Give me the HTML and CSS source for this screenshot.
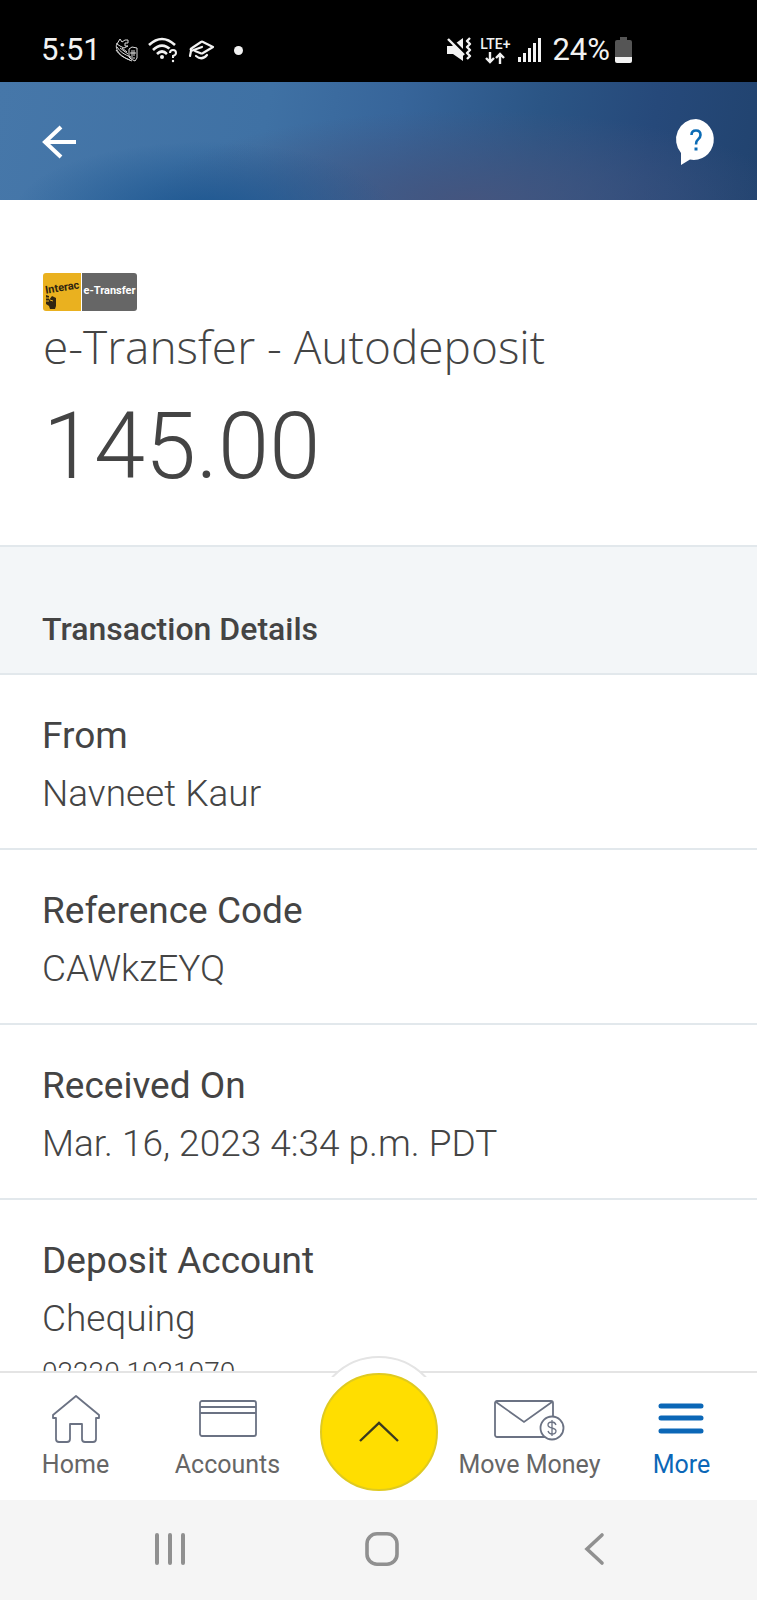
FILE: index.html
```html
<!DOCTYPE html>
<html lang="en">
<head>
<meta charset="utf-8">
<meta name="viewport" content="width=device-width, initial-scale=1">
<title>Transaction Details</title>
<link rel="stylesheet" href="styles.css">
</head>
<body>
<div class="status">
  <div class="status-group">
    <span class="clock">5:51</span>
    <svg width="24" height="24" viewBox="0 0 24 24" fill="none" stroke="#ddd" stroke-width="1"><path d="M3 5C0 12 7 19 18 23M3 9C6 14 11 17 17 19M2 12C5 17 10 20 16 22M3 6L6 1L8 4L11 2H14V5H11V8H14L10 10L6 8ZM8 10L13 14M15 11L18 9L23 10V20L21 23L17 21L15 19ZM18 12V19M20 12V18M6 10L14 16M16 15H22M16 20H21"/></svg>
    <svg width="30" height="26" viewBox="0 0 30 26" fill="none" stroke="#f2f2f2" stroke-width="2.6"><path d="M1 8Q14 -4 27 8M5 13Q14 4 23 13M9 17Q14 12 19 17"/><circle cx="14" cy="20" r="2" fill="#f2f2f2" stroke="none"/><path d="M22 16Q22 13 25 13Q28 13 28 16Q28 18 25 19V21" stroke="#000" stroke-width="5"/><path d="M22 16Q22 13 25 13Q28 13 28 16Q28 18 25 19V21" stroke-width="2"/><circle cx="25" cy="24" r="1.2" fill="#f2f2f2" stroke="none"/></svg>
    <svg width="26" height="24" viewBox="0 0 26 24" fill="none" stroke="#f2f2f2" stroke-width="2.2" stroke-linejoin="round" stroke-linecap="round"><path d="M14 9L3 13L2 18M3 12Q2 11 4 10L13 4Q14 3 15 4L25 9L15 15Q14 16 12 15L7 13M8 18Q14 23 19 17"/></svg>
    <span class="dot"></span>
  </div>
  <div class="status-group status-right">
    <svg width="26" height="26" viewBox="0 0 26 26"><path d="M1 9H6L17 1V24L7 17H1Z" fill="#f2f2f2"/><path d="M3 0L19 16" stroke="#000" stroke-width="3"/><path d="M2 2L18 18" stroke="#f2f2f2" stroke-width="2.4"/><path d="M24 1L21 4L24 7L21 10L24 13L21 16L24 19L21 22" fill="none" stroke="#f2f2f2" stroke-width="2.4" stroke-linejoin="round"/></svg>
    <span class="lte">LTE+<svg width="18" height="12" viewBox="0 0 18 12" fill="none" stroke="#f2f2f2" stroke-width="2.4"><path d="M4 0V10M0 6L4 10L8 6M14 12V2M10 6L14 2L18 6"/></svg></span>
    <svg width="23" height="24" viewBox="0 0 23 24" fill="#f2f2f2"><path d="M0 19h3v5H0zM5 15h3v9H5zM10 10h3v14h-3zM15 5h3v19h-3zM20 0h3v24h-3z"/></svg>
    <span class="battery-text">24%</span>
    <svg class="battery" width="17" height="26" viewBox="0 0 17 26"><path d="M5 0H12V3H15Q17 3 17 5V20H0V5Q0 3 2 3H5Z" fill="#555"/><path d="M0 20H17V24Q17 26 15 26H2Q0 26 0 24Z" fill="#f2f2f2"/></svg>
  </div>
</div>
<header class="header">
  <button class="icon-button" aria-label="Back"><svg width="35" height="34" viewBox="0 0 35 34" fill="none" stroke="#fff" stroke-width="4"><path d="M34 17H3M19 2L3 17L19 32"/></svg></button>
  <button class="icon-button" aria-label="Help"><svg width="40" height="46" viewBox="0 0 40 46"><path d="M20 0A20 20.500 0 1 1 14 40.500L5 46V34A20 20.500 0 0 1 20 0Z" fill="#fff"/><path d="M15.500 16Q15.500 11.500 20 11.500Q24.500 11.500 24.500 16Q24.500 18.500 22 20.500Q20 22 20 25.500" fill="none" stroke="#0b6bb5" stroke-width="2.600"/><path d="M18.500 28.500h3v3h-3z" fill="#0b6bb5"/></svg></button>
</header>
<main class="content">
  <section class="summary">
    <div class="logo"><span class="logo-interac"><span class="logo-word">Interac</span><svg class="logo-hand" width="12" height="14" viewBox="0 0 12 14"><path d="M1 0L4 1V5L7 1L11 3V11L10 14H5L4 11L1 9Z" fill="#302510"/><path d="M1 3H4M1 6H4M5 5L8 6" stroke="#eab11f"/></svg></span><span class="logo-transfer">e-Transfer</span></div>
    <h1 class="title">e-Transfer - Autodeposit</h1>
    <p class="amount">145.00</p>
  </section>
  <h2 class="section-title">Transaction Details</h2>
  <dl class="details">
    <div class="row"><dt>From</dt><dd>Navneet Kaur</dd></div>
    <div class="row"><dt>Reference Code</dt><dd>CAWkzEYQ</dd></div>
    <div class="row"><dt>Received On</dt><dd>Mar. 16, 2023 4:34 p.m. PDT</dd></div>
    <div class="row"><dt>Deposit Account</dt><dd>Chequing</dd><dd class="account">02220 1021070</dd></div>
  </dl>
</main>
<nav class="tabs">
  <a class="tab" href="#home"><svg width="50" height="50" viewBox="0 0 50 50" fill="none" stroke="#6b7283" stroke-width="1.800" stroke-linejoin="round"><path d="M25 2L48 21V24H45V45Q45 48 42 48H34Q31 48 31 45V30H19V45Q19 48 16 48H8Q5 48 5 45V24H2V21Z"/></svg>Home</a>
  <a class="tab" href="#accounts"><svg width="58" height="50" viewBox="0 0 58 50" fill="none" stroke="#6b7283" stroke-width="1.800"><rect x="1" y="7" width="56" height="35" rx="2"/><path d="M1 13H57M1 19H57"/></svg>Accounts</a>
  <div class="fab-slot"><button class="fab" aria-label="Open quick actions"><svg width="40" height="22" viewBox="0 0 40 22" fill="none" stroke="#3a3a20" stroke-width="2.400"><path d="M1 20L20 2L39 20"/></svg></button></div>
  <a class="tab" href="#move"><svg width="72" height="50" viewBox="0 0 72 50" fill="none" stroke="#6b7283" stroke-width="1.800"><rect x="1" y="7" width="58" height="36" rx="2"/><path d="M2 8L30 28L58 8"/><circle cx="58" cy="34" r="11.500" fill="#fff"/><path d="M62 31Q61 28 58 28Q54 28 54 31Q54 33 58 34Q62 35 62 37Q62 40 58 40Q55 40 54 37M58 26V42" stroke-width="1.300"/></svg>Move Money</a>
  <a class="tab tab-active" href="#more"><svg width="46" height="50" viewBox="0 0 46 50" stroke="#0b67b7" stroke-width="5" stroke-linecap="round"><path d="M2 12H42M2 24H42M2 37H42"/></svg>More</a>
</nav>
<div class="system">
  <button class="icon-button" aria-label="Recent apps"><svg width="32" height="34" viewBox="0 0 32 34" stroke="#909090" stroke-width="4" stroke-linecap="round"><path d="M3 3V31M16 3V31M29 3V31"/></svg></button>
  <button class="icon-button" aria-label="Home screen"><svg width="34" height="34" viewBox="0 0 34 34" fill="none" stroke="#909090" stroke-width="3.600"><rect x="2" y="1.800" width="30" height="30.400" rx="10"/></svg></button>
  <button class="icon-button" aria-label="System back"><svg width="32" height="34" viewBox="0 0 32 34" fill="none" stroke="#909090" stroke-width="3.600" stroke-linecap="round"><path d="M24 3L9 17L24 31"/></svg></button>
</div>
</body>
</html>
```
FILE: styles.css
```css
* { box-sizing: border-box; }

body {
  margin: 0;
  height: 100vh;
  display: flex;
  flex-direction: column;
  background: #fff;
  color: #444;
  font-family: Roboto, "Open Sans", sans-serif;
}

h1, h2, p, dl, dd { margin: 0; }
svg { display: block; flex: none; overflow: visible; }

.icon-button {
  border: 0;
  padding: 0;
  background: none;
}

.status {
  flex: none;
  height: 82px;
  padding: 18px 125px 0 41px;
  display: flex;
  align-items: flex-start;
  justify-content: space-between;
  background: #000;
  color: #f2f2f2;
}

.status-group {
  display: flex;
  align-items: center;
  height: 64px;
  gap: 10px;
}

.clock, .battery-text { font-size: 31px; line-height: 40px; }
.clock { margin-right: 3px; }
.dot { width: 9px; height: 9px; margin-left: 10px; border-radius: 50%; background: #f2f2f2; }
.status-right { gap: 8px; }
.battery-text { margin-left: 3px; }
.battery { margin-left: -3px; }

.lte {
  display: flex;
  flex-direction: column;
  align-items: center;
  font-size: 14px;
  font-weight: 500;
  line-height: 15px;
}

.header {
  flex: none;
  height: 118px;
  padding: 2px 41px 0 42px;
  display: flex;
  align-items: center;
  justify-content: space-between;
  background:
    radial-gradient(ellipse 190px 70px at 27% 110%, #1d5791, #1d579100),
    radial-gradient(ellipse 320px 90px at 62% 100%, #44557f, #44557f00),
    linear-gradient(100deg, #4677a9 0%, #3f71a4 35%, #37659a 52%, #2b5585 70%, #26497a 85%, #21436f 100%);
}

.content { flex: 1; min-height: 0; overflow: hidden; }

.summary { padding: 73px 43px 44px; }

.logo {
  display: flex;
  width: 94px;
  height: 38px;
  border-radius: 3px;
  overflow: hidden;
}

.logo-interac {
  position: relative;
  width: 38px;
  background: #eab11f;
}

.logo-word {
  position: absolute;
  left: 2px;
  top: 8px;
  color: #302510;
  font-size: 11px;
  font-weight: 700;
  line-height: 14px;
  transform: rotate(-9deg);
}

.logo-hand { position: absolute; left: 2px; bottom: 2px; }

.logo-transfer {
  flex: 1;
  border-left: 1px solid #fff;
  background: #666;
  color: #fff;
  font-size: 11px;
  font-weight: 700;
  line-height: 36px;
  text-align: center;
}

.title { font-family: "Open Sans", "Noto Sans", sans-serif; font-size: 46px; font-weight: 300; line-height: 70px; }
.amount { font-size: 92px; font-weight: 300; line-height: 108px; margin-top: 12px; }

.section-title {
  border: solid #e2e8ec;
  border-width: 2px 0;
  padding: 62px 42px 24px;
  background: #f3f6f8;
  font-size: 32px;
  font-weight: 500;
  line-height: 40px;
}

.row {
  padding: 32px 42px 25px;
  border-bottom: 2px solid #e2e8ec;
}

dt, dd { font-size: 37px; line-height: 58px; }
dd { font-weight: 300; }
.account { font-size: 28px; line-height: 50px; }

.tabs {
  flex: none;
  height: 129px;
  display: grid;
  grid-template-columns: 151fr 153fr 149fr 153fr 151fr;
  border-top: 2px solid #e4e4e4;
  background: #fff;
}

.tab {
  display: flex;
  flex-direction: column;
  align-items: center;
  gap: 4px;
  padding-top: 21px;
  color: #666;
  font-size: 25px;
  line-height: 34px;
  text-decoration: none;
  white-space: nowrap;
}

.tab-active { color: #0b67b7; }

.fab-slot {
  position: relative;
  display: flex;
  justify-content: center;
}

.fab-slot::before {
  content: "";
  position: absolute;
  top: -17px;
  width: 126px;
  height: 126px;
  border: 2px solid #e4e4e4;
  border-radius: 50%;
  background: #fff;
  clip-path: inset(0 0 109px 0);
}

.fab {
  position: relative;
  width: 118px;
  height: 118px;
  display: grid;
  place-items: center;
  border: 2px solid #dfca20;
  border-radius: 50%;
  background: #ffde00;
}

.system {
  flex: none;
  height: 100px;
  padding: 0 57px 3px 64px;
  display: grid;
  grid-template-columns: repeat(3, 1fr);
  place-items: center;
  background: #f5f5f5;
}
```
